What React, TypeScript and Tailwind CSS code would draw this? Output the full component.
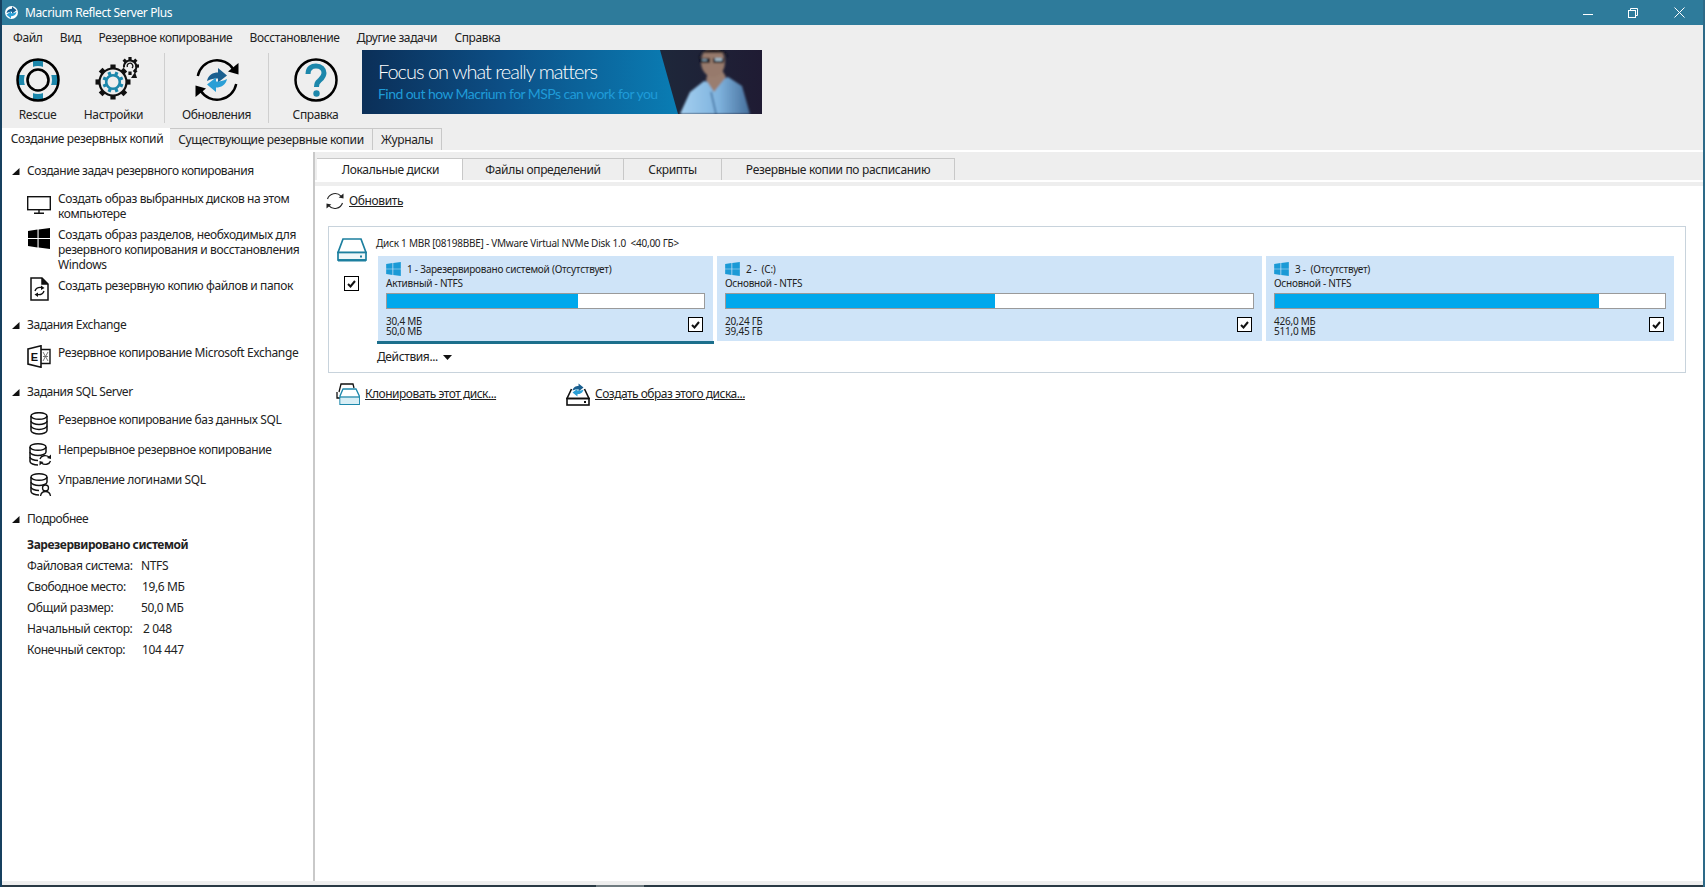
import type { ReactNode } from "react"

const TEAL = "#1c87ab"

function WinLogo({ color, w, h }: { color: string; w: number; h: number }) {
  return (
    <svg width={w} height={h} viewBox="0 0 22 21" fill={color} className="shrink-0">
      <polygon points="0,3 9.5,1.6 9.5,10 0,10" />
      <polygon points="10.6,1.4 22,0 22,10 10.6,10" />
      <polygon points="0,11 9.5,11 9.5,19.4 0,18" />
      <polygon points="10.6,11 22,11 22,21 10.6,19.6" />
    </svg>
  )
}

function RescueIcon() {
  return (
    <svg width="46" height="46" viewBox="0 0 46 46">
      <rect x="18" y="3" width="10" height="40" fill={TEAL} />
      <rect x="3" y="18" width="40" height="10" fill={TEAL} />
      <circle cx="23" cy="23" r="14" fill="#eeeeee" />
      <circle cx="23" cy="23" r="20.5" fill="none" stroke="#000" strokeWidth="2.5" />
      <circle cx="23" cy="23" r="10.5" fill="#eeeeee" stroke="#000" strokeWidth="2.6" />
    </svg>
  )
}

function SettingsIcon() {
  const angles = [0, 45, 90, 135, 180, 225, 270, 315]
  return (
    <svg width="46" height="46" viewBox="0 0 46 46" className="overflow-visible">
      <g transform="translate(22 25)">
        {angles.map((a) => (
          <rect key={a} x="-2.6" y="-17.5" width="5.2" height="5" fill="#111" transform={`rotate(${a})`} />
        ))}
        <circle r="13.5" fill="#eeeeee" stroke="#111" strokeWidth="2.2" />
        {angles.map((a) => (
          <rect key={a} x="-1.6" y="-10.6" width="3.2" height="3.5" fill={TEAL} transform={`rotate(${a + 22})`} />
        ))}
        <circle r="6.8" fill="#eeeeee" stroke={TEAL} strokeWidth="2.6" />
      </g>
      <g transform="translate(39 9)">
        {[0, 45, 90, 135, 180, 315].map((a) => (
          <rect key={a} x="-1.6" y="-9" width="3.2" height="3.5" fill="#111" transform={`rotate(${a})`} />
        ))}
        <path d="M-6 1.5 A6.2 6.2 0 1 1 5 4.5" fill="none" stroke="#111" strokeWidth="2" />
        <path d="M-2.6 1 A2.8 2.8 0 1 1 2 2" fill="none" stroke="#111" strokeWidth="1.2" />
        <polygon points="1,12 7,12 5,6" fill="#111" />
      </g>
    </svg>
  )
}

function SyncArrows() {
  return (
    <g>
      <path d="M13 24 C14 18 19 15.5 24 15.5 V11 L33 18.5 L24 25.5 V21.5 C20 21.5 17 22 13 24z" fill="#1a5f8f" />
      <path d="M33 22 C32 28 27 30.5 22 30.5 V35 L13 27.5 L22 20.5 V24.5 C26 24.5 29 24 33 22z" fill="#2a9fd6" />
    </g>
  )
}

function UpdatesIcon() {
  return (
    <svg width="46" height="46" viewBox="0 0 46 46">
      <path d="M3.8 19 A19.5 19.5 0 0 1 39.5 12.5" fill="none" stroke="#000" strokeWidth="2.4" />
      <polygon points="44.5,6 44.5,17.5 34,14.5" fill="#000" />
      <path d="M42.2 27 A19.5 19.5 0 0 1 6.5 33.5" fill="none" stroke="#000" strokeWidth="2.4" />
      <polygon points="1.5,40 1.5,28.5 12,31.5" fill="#000" />
      <SyncArrows />
    </svg>
  )
}

function HelpIcon() {
  return (
    <svg width="46" height="46" viewBox="0 0 46 46">
      <circle cx="23" cy="23" r="20.5" fill="none" stroke="#000" strokeWidth="2.5" />
      <path
        d="M15 17 C15 11 19 9 23 9 C28 9 31 12 31 16 C31 20 28 22 26 24 C24 25.5 23.5 27 23.5 30"
        fill="none"
        stroke={TEAL}
        strokeWidth="5"
      />
      <circle cx="23.5" cy="36.5" r="3.2" fill={TEAL} />
    </svg>
  )
}

function MonitorIcon() {
  return (
    <svg width="24" height="18" viewBox="0 0 24 18" fill="none" stroke="#111" strokeWidth="1.4">
      <rect x="0.7" y="0.7" width="22.6" height="13" />
      <path d="M12 14 V17 M7 17.3 H17" />
    </svg>
  )
}

function FileSyncIcon() {
  return (
    <svg width="19" height="24" viewBox="0 0 19 24" fill="none" stroke="#111" strokeWidth="1.5">
      <path d="M1 1 H12 L18 7 V23 H1 Z" />
      <path d="M12 1 V7 H18" fill="#111" />
      <path d="M5 14 C6 11 9 10 12 10.5 M14 14 C13 17 10 18 7 17.5" strokeWidth="1.4" />
      <polygon points="11,8.5 14.5,11 11,13" fill="#111" stroke="none" />
      <polygon points="8,15.5 4.5,17.5 8,20" fill="#111" stroke="none" />
    </svg>
  )
}

function ExchangeIcon() {
  return (
    <svg width="24" height="23" viewBox="0 0 24 23" fill="none" stroke="#111" strokeWidth="1.6">
      <path d="M1 4 L14 0.8 V22.2 L1 19 Z" />
      <path d="M14 4.5 H23 V18.5 H14" strokeWidth="1.4" />
      <text x="3.7" y="15.5" fontSize="11" fontWeight="700" fill="#111" stroke="none" fontFamily="Liberation Sans, sans-serif">
        E
      </text>
      <path d="M16 7 L21 16 M21 7 L16 16 M16 11.5 H21" strokeWidth="0.9" stroke="#666" />
    </svg>
  )
}

function DbIcon({ extra }: { extra?: ReactNode }) {
  return (
    <svg width="23" height="23" viewBox="0 0 23 23" fill="none" stroke="#111" strokeWidth="1.5" className="overflow-visible">
      <ellipse cx="9" cy="4" rx="8" ry="3.3" />
      <path d="M1 4 V18.5 C1 20.5 5 22 9 22" />
      <path d="M17 4 V9" />
      <path d="M1 9 C1 11 5 12.6 9 12.6 C13 12.6 17 11 17 9" />
      <path d="M1 14 C1 16 5 17.4 9 17.4" />
      {extra}
    </svg>
  )
}

function DbPlainIcon() {
  return (
    <svg width="18" height="23" viewBox="0 0 18 23" fill="none" stroke="#111" strokeWidth="1.5">
      <ellipse cx="9" cy="4" rx="8" ry="3.3" />
      <path d="M1 4 V18.5 C1 20.5 5 22 9 22 C13 22 17 20.5 17 18.5 V4" />
      <path d="M1 9 C1 11 5 12.6 9 12.6 C13 12.6 17 11 17 9" />
      <path d="M1 13.8 C1 15.8 5 17.4 9 17.4 C13 17.4 17 15.8 17 13.8" />
    </svg>
  )
}

function DiskIcon() {
  return (
    <svg width="30" height="24" viewBox="0 0 30 24" fill="none" stroke="#1c7f9f" strokeWidth="1.7">
      <path d="M6 1 H24 L29 14.5 H1 Z" />
      <rect x="1" y="14.5" width="28" height="7.5" fill="#eef6f9" />
      <path d="M1 22.3 H29" strokeWidth="2.4" />
      <rect x="23" y="17.5" width="2" height="2" fill="#1c7f9f" stroke="none" />
    </svg>
  )
}

function CloneIcon() {
  return (
    <svg width="24" height="22" viewBox="0 0 24 22" fill="none">
      <path d="M3 9 L5 1 H17 L18 5" stroke="#111" strokeWidth="1.3" />
      <path d="M1 9 V15 H4" stroke="#111" strokeWidth="1.3" />
      <path d="M7 6 H20 L23.3 13 V21.3 H4 V13 Z" fill="#fff" stroke={TEAL} strokeWidth="1.3" />
      <path d="M4.5 14.5 H23 V21 H4.5 Z" fill="#d8eef5" />
      <path d="M4 14 H23.3" stroke={TEAL} strokeWidth="1.3" />
    </svg>
  )
}

function ImageDiskIcon() {
  return (
    <svg width="24" height="23" viewBox="0 0 24 23" fill="none">
      <path d="M5.5 6 L1 15.5 H23 L18.5 6" stroke="#111" strokeWidth="1.6" />
      <rect x="1" y="15.5" width="22" height="6.5" stroke="#111" strokeWidth="1.6" />
      <rect x="18" y="18" width="2" height="2" fill="#111" />
      <g transform="translate(12 7) scale(0.55) translate(-23 -23)">
        <SyncArrows />
      </g>
    </svg>
  )
}

function RefreshIcon() {
  return (
    <svg width="18" height="18" viewBox="0 0 18 18" fill="none" stroke="#222" strokeWidth="1.1" className="shrink-0">
      <path d="M1.5 7 A8 8 0 0 1 15 4.2" />
      <polygon points="17.5,1.5 17.5,6.6 12.7,5.4" fill="#222" stroke="none" />
      <path d="M16.5 11 A8 8 0 0 1 3 13.8" />
      <polygon points="0.5,16.5 0.5,11.4 5.3,12.6" fill="#222" stroke="none" />
    </svg>
  )
}

function Check({ className = "" }: { className?: string }) {
  return (
    <div className={`flex h-[15px] w-[15px] shrink-0 items-center justify-center border border-black bg-white ${className}`}>
      <svg width="9" height="8" viewBox="0 0 9 8" fill="none" stroke="#111" strokeWidth="2">
        <path d="M1 4 L3.5 6.5 L8 1" />
      </svg>
    </div>
  )
}

function ToolButton({ width, icon, label }: { width: string; icon: ReactNode; label: string }) {
  return (
    <div className={`flex flex-col items-center pt-[7px] ${width}`}>
      {icon}
      <span className="mt-[4px] h-[16px] text-[12px] leading-[16px] text-[#222]">{label}</span>
    </div>
  )
}

function Heading({ children, className = "" }: { children: ReactNode; className?: string }) {
  return (
    <div className={`flex h-[16px] items-center pl-[10px] text-[12px] tracking-[-0.46px] text-[#222] ${className}`}>
      <svg width="8" height="7" viewBox="0 0 8 7" className="mr-[7px] shrink-0">
        <polygon points="7.5,0 7.5,7 0,7" fill="#111" />
      </svg>
      {children}
    </div>
  )
}

function Item({ icon, iconPos, className = "", children }: { icon: ReactNode; iconPos: string; className?: string; children: ReactNode }) {
  return (
    <div className={`flex pl-[25px] ${className}`}>
      <div className="h-[15px] w-[31px] shrink-0">
        <div className={iconPos}>{icon}</div>
      </div>
      <div className="pr-[12px] text-[12px] leading-[15px] text-[#222]">{children}</div>
    </div>
  )
}

function Detail({ label, value, valueLeft }: { label: string; value: string; valueLeft: string }) {
  return (
    <div className="flex h-[21px] items-center pl-[25px] text-[12px] text-[#222]">
      <span className={`shrink-0 ${valueLeft}`}>{label}</span>
      <span>{value}</span>
    </div>
  )
}

function Partition({
  width,
  title,
  kind,
  pct,
  used,
  total,
  active,
}: {
  width: string
  title: string
  kind: string
  pct: number
  used: string
  total: string
  active?: boolean
}) {
  return (
    <div className={`relative h-[85px] bg-[#cfe4f8] px-[8px] pt-[6px] text-[10px] tracking-[-0.24px] text-[#222] ${width}`}>
      <div className="flex h-[14px] items-center">
        <WinLogo color="#1b9ad6" w={15} h={14} />
        <span className="ml-[6px] whitespace-pre">{title}</span>
      </div>
      <div className="flex h-[14px] items-center">{kind}</div>
      <div className="mt-[3px] h-[16px] border border-[#9a9a9a] bg-white">
        <div className="h-full bg-[#00a8ec]" style={{ width: `${pct}%` }} />
      </div>
      <div className="mt-[7px] flex items-start justify-between">
        <div className="leading-[10px]">
          <div>{used}</div>
          <div>{total}</div>
        </div>
        <Check className="mt-px mr-[2px]" />
      </div>
      {active && <div className="absolute -right-px -bottom-[3px] -left-px h-[3px] bg-[#1c6f8c]" />}
    </div>
  )
}

function Banner() {
  return (
    <div className="relative h-[64px] w-[400px] shrink-0 overflow-hidden">
      <svg width="400" height="64" viewBox="0 0 400 64" className="absolute inset-0">
        <defs>
          <linearGradient id="bannerBlue" x1="0" x2="1" y1="0" y2="0">
            <stop offset="0" stopColor="#0b2f58" />
            <stop offset="0.45" stopColor="#0c4f86" />
            <stop offset="1" stopColor="#0a7db4" />
          </linearGradient>
          <linearGradient id="photoBg" x1="0" x2="1" y1="0" y2="0">
            <stop offset="0" stopColor="#3a6b72" />
            <stop offset="0.4" stopColor="#1c3844" />
            <stop offset="1" stopColor="#1f1b33" />
          </linearGradient>
          <linearGradient id="shirt" x1="0" x2="1" y1="0" y2="0">
            <stop offset="0" stopColor="#a4cff0" />
            <stop offset="0.55" stopColor="#7fb3de" />
            <stop offset="1" stopColor="#466f9c" />
          </linearGradient>
          <filter id="soft">
            <feGaussianBlur stdDeviation="1" />
          </filter>
        </defs>
        <rect width="400" height="64" fill="url(#photoBg)" />
        <polygon points="0,0 298,0 316,64 0,64" fill="url(#bannerBlue)" />
        <g filter="url(#soft)">
          <polygon points="318,64 328,42 342,31 352,33 366,27 380,36 388,64" fill="url(#shirt)" />
          <polygon points="344,30 352,42 364,27 360,20 346,22" fill="#9a7e70" />
          <ellipse cx="351" cy="12" rx="12" ry="15" fill="#977a6c" />
          <path d="M337 9 C337 -4 365 -4 366 8 L362 3 L340 3 Z" fill="#14141a" />
          <rect x="338" y="8" width="10" height="5" fill="#0d1118" />
          <rect x="351" y="8" width="11" height="5" fill="#0d1118" />
          <rect x="353" y="8" width="7" height="3" fill="#9fb8c8" />
          <rect x="340" y="9" width="5" height="2" fill="#7d96a8" />
          <path d="M349 42 L354 64" stroke="#3f6f9e" strokeWidth="1.5" fill="none" />
        </g>
      </svg>
      <div className="relative flex flex-col pt-[9px] pl-[16px] font-['Lato',sans-serif]">
        <span className="text-[20px] leading-[24px] font-light tracking-[-1px] text-white">Focus on what really matters</span>
        <span className="mt-[3px] text-[14px] leading-[16px] tracking-[-0.55px] text-[#1f9bd8]">
          Find out how Macrium for MSPs can work for you
        </span>
      </div>
    </div>
  )
}

const menu = ["Файл", "Вид", "Резервное копирование", "Восстановление", "Другие задачи", "Справка"]

export default function App() {
  return (
    <div className="flex h-[887px] w-[1705px] flex-col overflow-hidden border-r-2 border-l-2 border-r-[#2d6a88] border-l-[#16405f] bg-[#eeeeee] font-['Noto_Sans',sans-serif] tracking-[-0.38px]">
      {/* title bar */}
      <div className="flex h-[25px] shrink-0 items-center bg-[#2e7b9b] text-white">
        <div className="ml-[3px] flex h-[13px] w-[13px] items-center justify-center rounded-full bg-white">
          <svg width="13" height="13" viewBox="10 10 26 26">
            <SyncArrows />
          </svg>
        </div>
        <span className="ml-[7px] text-[12px]">Macrium Reflect Server Plus</span>
        <div className="mr-[18px] ml-auto flex items-center">
          <svg width="10" height="10" viewBox="0 0 10 10" stroke="#fff" strokeWidth="1">
            <path d="M0 6.5 H10" />
          </svg>
          <svg width="10" height="10" viewBox="0 0 10 10" fill="none" stroke="#fff" strokeWidth="1" className="ml-[35px]">
            <rect x="0.5" y="2.5" width="7" height="7" />
            <path d="M2.5 2.5 V0.5 H9.5 V7.5 H7.5" />
          </svg>
          <svg width="11" height="11" viewBox="0 0 11 11" stroke="#fff" strokeWidth="1" className="ml-[36px]">
            <path d="M0.5 0.5 L10.5 10.5 M10.5 0.5 L0.5 10.5" />
          </svg>
        </div>
      </div>

      {/* menu */}
      <div className="flex h-[25px] shrink-0 items-center gap-[17.3px] pl-[11px] text-[12px] text-[#222]">
        {menu.map((m) => (
          <span key={m}>{m}</span>
        ))}
      </div>

      {/* toolbar */}
      <div className="flex h-[78px] shrink-0">
        <ToolButton width="w-[71px]" icon={<RescueIcon />} label="Rescue" />
        <ToolButton width="w-[81px]" icon={<SettingsIcon />} label="Настройки" />
        <div className="mt-[3px] ml-[10px] h-[70px] w-px bg-[#cfcfcf]" />
        <ToolButton width="w-[103px]" icon={<UpdatesIcon />} label="Обновления" />
        <div className="mt-[3px] h-[70px] w-px bg-[#cfcfcf]" />
        <ToolButton width="w-[93px]" icon={<HelpIcon />} label="Справка" />
        <Banner />
      </div>

      {/* main tabs */}
      <div className="flex h-[22px] shrink-0 text-[12px] tracking-[-0.34px] text-[#222]">
        <div className="flex w-[168px] items-center justify-center bg-white pl-[2px]">Создание резервных копий</div>
        <div className="flex w-[203px] items-center justify-center border-t border-r border-[#c8c8c8]">Существующие резервные копии</div>
        <div className="flex w-[69px] items-center justify-center border-t border-r border-[#c8c8c8]">Журналы</div>
      </div>
      <div className="h-[2px] shrink-0 bg-white" />

      <div className="flex min-h-0 flex-1 bg-white">
        {/* left panel */}
        <div className="w-[313px] shrink-0 border-r-2 border-[#c9c9c9] pt-[11px]">
          <Heading>Создание задач резервного копирования</Heading>
          <Item className="mt-[12px]" iconPos="mt-[5px]" icon={<MonitorIcon />}>
            Создать образ выбранных дисков на этом компьютере
          </Item>
          <Item className="mt-[6px]" iconPos="mt-px ml-px" icon={<WinLogo color="#000" w={22} h={21} />}>
            Создать образ разделов, необходимых для резервного копирования и восстановления Windows
          </Item>
          <Item className="mt-[6px]" iconPos="ml-[3px] -mt-px" icon={<FileSyncIcon />}>
            Создать резервную копию файлов и папок
          </Item>
          <Heading className="mt-[24px]">Задания Exchange</Heading>
          <Item className="mt-[12px]" iconPos="" icon={<ExchangeIcon />}>
            Резервное копирование Microsoft Exchange
          </Item>
          <Heading className="mt-[24px]">Задания SQL Server</Heading>
          <Item className="mt-[12px]" iconPos="ml-[3px]" icon={<DbPlainIcon />}>
            Резервное копирование баз данных SQL
          </Item>
          <Item
            className="mt-[15px]"
            iconPos="ml-[2px] mt-px"
            icon={
              <DbIcon
                extra={
                  <g strokeWidth="1.3">
                    <path d="M11 16 C12 12.5 17 11.5 20 14" />
                    <polygon points="22,11.5 22,16 18,15" fill="#111" stroke="none" />
                    <path d="M21.5 18 C20.5 21.5 15.5 22.5 12.5 20" />
                    <polygon points="10.5,22.5 10.5,18 14.5,19" fill="#111" stroke="none" />
                  </g>
                }
              />
            }
          >
            Непрерывное резервное копирование
          </Item>
          <Item
            className="mt-[15px]"
            iconPos="ml-[3px] mt-px"
            icon={
              <DbIcon
                extra={
                  <g strokeWidth="1.3">
                    <circle cx="15.5" cy="15" r="3" />
                    <path d="M10.5 23 C11 20 13 18.5 15.5 18.5 C18 18.5 20 20 20.5 23" />
                  </g>
                }
              />
            }
          >
            Управление логинами SQL
          </Item>
          <Heading className="mt-[24px]">Подробнее</Heading>
          <div className="mt-[7px] flex h-[21px] items-center pl-[25px] text-[12px] font-bold tracking-[-0.45px] text-[#222]">Зарезервировано системой</div>
          <Detail label="Файловая система:" value="NTFS" valueLeft="w-[114px]" />
          <Detail label="Свободное место:" value="19,6 МБ" valueLeft="w-[115px]" />
          <Detail label="Общий размер:" value="50,0 МБ" valueLeft="w-[114px]" />
          <Detail label="Начальный сектор:" value="2 048" valueLeft="w-[116px]" />
          <Detail label="Конечный сектор:" value="104 447" valueLeft="w-[115px]" />
        </div>

        {/* right panel */}
        <div className="min-w-0 flex-1">
          <div className="flex h-[28px] items-end bg-[#eeeeee] pl-[2px] text-[12px] tracking-[-0.34px] text-[#222]">
            <div className="flex h-[22px] w-[145px] items-center justify-center border-t border-[#c8c8c8] bg-white pl-[2px]">Локальные диски</div>
            <div className="flex h-[22px] w-[162px] items-center justify-center border-t border-r border-l border-[#c8c8c8]">Файлы определений</div>
            <div className="flex h-[22px] w-[98px] items-center justify-center border-t border-r border-[#c8c8c8]">Скрипты</div>
            <div className="flex h-[22px] w-[233px] items-center justify-center border-t border-r border-[#c8c8c8]">Резервные копии по расписанию</div>
          </div>
          <div className="h-[2px] bg-white" />
          <div className="h-[4px] bg-[#eeeeee]" />

          <div className="flex items-center pt-[6px] pl-[11px]">
            <RefreshIcon />
            <span className="ml-[5px] text-[12px] text-[#222] underline">Обновить</span>
          </div>

          {/* disk */}
          <div className="mt-[16px] mr-[17px] ml-[13px] flex h-[147px] border border-[#c8d3dc]">
            <div className="w-[49px] shrink-0 pt-[11px]">
              <div className="ml-[8px]">
                <DiskIcon />
              </div>
              <Check className="mt-[14px] ml-[15px]" />
            </div>
            <div className="min-w-0 flex-1 pt-[9px] pr-[11px]">
              <div className="-ml-[2px] flex h-[14px] items-center text-[10px] tracking-[-0.25px] whitespace-pre text-[#222]">
                {"Диск 1 MBR [08198BBE] - VMware Virtual NVMe Disk 1.0  <40,00 ГБ>"}
              </div>
              <div className="mt-[6px] flex gap-[4px]">
                <Partition
                  width="w-[335px]"
                  title="1 - Зарезервировано системой (Отсутствует)"
                  kind="Активный - NTFS"
                  pct={60.2}
                  used="30,4 МБ"
                  total="50,0 МБ"
                  active
                />
                <Partition width="w-[545px]" title="2 -  (C:)" kind="Основной - NTFS" pct={51} used="20,24 ГБ" total="39,45 ГБ" />
                <Partition width="w-[408px]" title="3 -  (Отсутствует)" kind="Основной - NTFS" pct={83} used="426,0 МБ" total="511,0 МБ" />
              </div>
              <div className="mt-[8px] -ml-px flex h-[16px] items-center text-[12px] text-[#222]">
                Действия...
                <svg width="9" height="5" viewBox="0 0 9 5" className="ml-[5px]">
                  <polygon points="0,0 9,0 4.5,5" fill="#111" />
                </svg>
              </div>
            </div>
          </div>

          <div className="mt-[10px] ml-[21px] flex text-[12px] tracking-[-0.5px] text-[#222]">
            <div className="flex h-[22px] w-[230px] items-center gap-[5px]">
              <CloneIcon />
              <span className="underline">Клонировать этот диск...</span>
            </div>
            <div className="flex h-[22px] items-center gap-[5px]">
              <ImageDiskIcon />
              <span className="underline">Создать образ этого диска...</span>
            </div>
          </div>
        </div>
      </div>

      {/* bottom edge */}
      <div className="h-[4px] shrink-0 bg-[#eeeeee]" />
      <div className="flex h-[2px] shrink-0 bg-[#2a3a44]">
        <div className="ml-[594px] w-[48px] bg-[#6f7b80]" />
      </div>
    </div>
  )
}
